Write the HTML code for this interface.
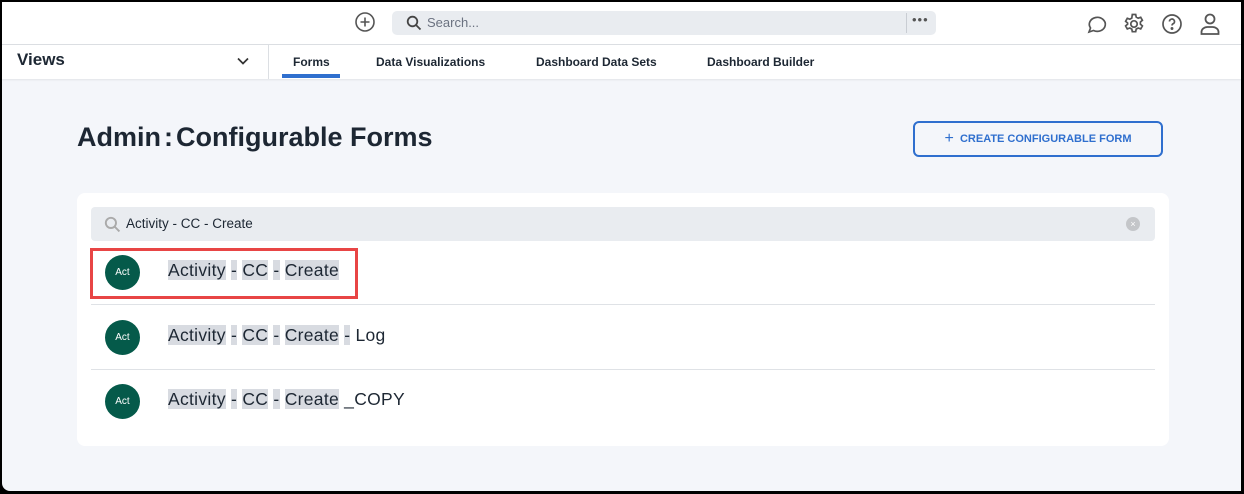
<!DOCTYPE html>
<html><head><style>
*{margin:0;padding:0;box-sizing:border-box}
html,body{width:1244px;height:494px;overflow:hidden;background:#000;font-family:"Liberation Sans",sans-serif}
#f{position:absolute;left:2px;top:2px;width:1239px;height:489px;background:#f4f6fa;border-radius:0 0 0 8px;overflow:hidden}
.top{position:absolute;left:0;top:0;width:100%;height:43px;background:#fff;border-bottom:1px solid #dcdfe3}
.nav{position:absolute;left:0;top:43px;width:100%;height:34px;background:#fff;box-shadow:0 1px 2px rgba(0,0,0,.08)}
.abs{position:absolute}
.tab{position:absolute;top:10px;font-size:12px;font-weight:bold;color:#1d2733}
.row{position:absolute;left:14px;width:1064px;height:64px;border-bottom:1px solid #dfe2e6}
.av{position:absolute;left:14px;width:35px;height:35px;border-radius:50%;background:#055a4a;color:#fff;font-size:10px;text-align:center;line-height:35px}
.t{position:absolute;left:77px;font-size:17.5px;letter-spacing:.3px;color:#1d2733;white-space:pre}
.t span{background:#d8dbe1}
</style></head><body><div id="f">
<div class="top">
<svg class="abs" style="left:352px;top:9px" width="22" height="22" viewBox="0 0 22 22" fill="none" stroke="#555" stroke-width="1.6"><circle cx="11" cy="11" r="9"/><path d="M11 6.5v9M6.5 11h9"/></svg>
<div class="abs" style="left:390px;top:9px;width:544px;height:24px;background:#e9ecf0;border-radius:5px"></div>
<svg class="abs" style="left:404px;top:13px" width="16" height="16" viewBox="0 0 16 16" fill="none" stroke="#444" stroke-width="1.8"><circle cx="6.5" cy="6.5" r="4.8"/><path d="M10 10l4.5 4.5"/></svg>
<div class="abs" style="left:425px;top:13px;font-size:13px;color:#6b7280">Search...</div>
<div class="abs" style="left:904px;top:11px;width:1px;height:20px;background:#c9cdd3"></div>
<div class="abs" style="left:910px;top:10px;font-size:13px;color:#555;letter-spacing:1px">•••</div>
<svg class="abs" style="left:1083px;top:11px" width="24" height="22" viewBox="0 0 24 22" fill="none" stroke="#555" stroke-width="1.7"><path d="M4 19l1.5-4A8 7 0 1 1 8.5 17.5z"/></svg>
<svg class="abs" style="left:1120px;top:10px" width="24" height="24" viewBox="0 0 24 24" fill="none" stroke="#555" stroke-width="1.7"><circle cx="12" cy="12" r="3.2"/><path d="M10.3 2.5h3.4l.5 2.6 2 1.1 2.5-.9 1.7 3-2 1.7v2.2l2 1.7-1.7 3-2.5-.9-2 1.1-.5 2.6h-3.4l-.5-2.6-2-1.1-2.5.9-1.7-3 2-1.7V11l-2-1.7 1.7-3 2.5.9 2-1.1z"/></svg>
<svg class="abs" style="left:1159px;top:11px" width="22" height="22" viewBox="0 0 22 22" fill="none" stroke="#555" stroke-width="1.7"><circle cx="11" cy="11" r="9"/><path d="M8.5 8.5a2.5 2.5 0 1 1 3.5 2.3c-.7.4-1 .8-1 1.7"/><circle cx="11" cy="15.5" r=".6" fill="#555"/></svg>
<svg class="abs" style="left:1197px;top:10px" width="22" height="24" viewBox="0 0 22 24" fill="none" stroke="#555" stroke-width="1.8"><circle cx="11" cy="7" r="4.5"/><path d="M2.5 22v-2a6 5 0 0 1 6-5h5a6 5 0 0 1 6 5v2z"/></svg>
</div>
<div class="nav">
<div class="abs" style="left:15px;top:5px;font-size:17px;font-weight:bold;color:#1d2733">Views</div>
<svg class="abs" style="left:234px;top:11px" width="14" height="10" viewBox="0 0 14 10" fill="none" stroke="#333" stroke-width="1.7"><path d="M2 2.5l5 5 5-5"/></svg>
<div class="abs" style="left:266px;top:0;width:1px;height:34px;background:#dcdfe3"></div>
<div class="tab" style="left:291px">Forms</div>
<div class="abs" style="left:280px;top:29px;width:58px;height:4px;background:#2f6fce"></div>
<div class="tab" style="left:374px">Data Visualizations</div>
<div class="tab" style="left:534px">Dashboard Data Sets</div>
<div class="tab" style="left:705px">Dashboard Builder</div>
</div>
<div class="abs" style="left:75px;top:120px;font-size:27px;font-weight:bold;color:#1d2733">Admin<span style="margin:0 3px">:</span>Configurable Forms</div>
<div class="abs" style="left:911px;top:119px;width:250px;height:36px;border:2px solid #2f6fce;border-radius:6px;color:#2f6fce;font-size:11px;font-weight:bold;text-align:center;line-height:32px"><span style="font-size:16px;font-weight:normal;vertical-align:-1px">+</span>&nbsp; CREATE CONFIGURABLE FORM</div>
<div class="abs" style="left:75px;top:191px;width:1092px;height:253px;background:#fff;border-radius:8px">
<div class="abs" style="left:14px;top:14px;width:1064px;height:34px;background:#e9ecf0;border-radius:4px">
<svg class="abs" style="left:13px;top:9px" width="17" height="17" viewBox="0 0 16 16" fill="none" stroke="#aaa" stroke-width="1.8"><circle cx="6.5" cy="6.5" r="4.8"/><path d="M10 10l4.5 4.5"/></svg>
<div class="abs" style="left:35px;top:9px;font-size:13.5px;color:#1d2733">Activity - CC - Create</div>
<div class="abs" style="left:1035px;top:10px;width:14px;height:14px;border-radius:50%;background:#c4c6c9;color:#fff;font-size:9px;text-align:center;line-height:14px">×</div>
</div>
<div class="row" style="top:48px"><div class="av" style="top:14px">Act</div><div class="t" style="top:19px"><span>Activity</span> <span>-</span> <span>CC</span> <span>-</span> <span>Create</span></div></div>
<div class="row" style="top:113px"><div class="av" style="top:14px">Act</div><div class="t" style="top:19px"><span>Activity</span> <span>-</span> <span>CC</span> <span>-</span> <span>Create</span> <span>-</span> Log</div></div>
<div class="row" style="top:177px;border:none"><div class="av" style="top:14px">Act</div><div class="t" style="top:19px"><span>Activity</span> <span>-</span> <span>CC</span> <span>-</span> <span>Create</span> _COPY</div></div>
<div class="abs" style="left:13px;top:55px;width:268px;height:51px;border:3px solid #e84545"></div>
</div>
</div></body></html>
